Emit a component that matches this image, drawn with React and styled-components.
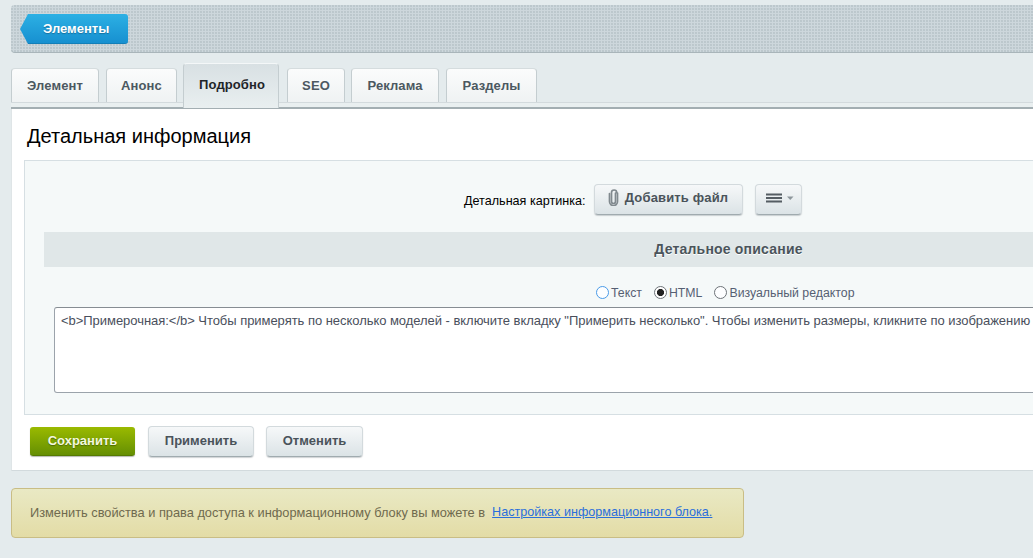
import React from 'react';
import styled, { createGlobalStyle } from 'styled-components';

const Global = createGlobalStyle`
  html, body { margin: 0; padding: 0; height: 100%; overflow: hidden; }
  body { background: #e4ebed; font-family: "Liberation Sans", Arial, sans-serif; }
`;
const Page = styled.div`
  width: 1033px; height: 558px; overflow: hidden; padding: 5px 0 0 11px; box-sizing: border-box;
  display: flex; flex-direction: column;
`;
const Bar = styled.div`
  height: 48px; box-sizing: border-box; border-radius: 4px 0 0 4px; border-bottom: 1px solid #a9b5ba;
  background-color: #cdd7dc;
  background-image: radial-gradient(circle at 1px 1px, #bcc7cc 0.7px, transparent 0.9px);
  background-size: 3px 3px;
  padding: 9px 0 0 9px; display: flex; align-items: flex-start;
`;
const Crumb = styled.a`
  width: 108px; height: 30px; position: relative; box-sizing: border-box; padding-left: 23px;
  display: flex; align-items: center; color: #fff; font-size: 13px; font-weight: bold;
  text-shadow: 0 1px 1px #17709f; letter-spacing: 0;
  background: linear-gradient(#2cb0e4, #1790d0);
  clip-path: polygon(8px 0, 100% 0, 100% 100%, 8px 100%, 0 50%);
  border-radius: 3px; border-bottom: 1px solid #137fb8;
`;
const Tabs = styled.div`
  display: flex; align-items: flex-end; height: 39px; margin-top: 10px; position: relative; z-index: 1;
`;
const Tab = styled.div`
  box-sizing: border-box; width: ${p => p.$w}px; margin-left: ${p => p.$ml}px;
  height: ${p => (p.$active ? 45 : 34)}px; margin-bottom: ${p => (p.$active ? -6 : 0)}px;
  padding-left: ${p => (p.$active ? 2 : 0)}px;
  border: 1px solid #c4cdd0; border-bottom: none; border-radius: 4px 4px 0 0;
  border-top-color: ${p => (p.$active ? '#f4f7f8' : '#d5dcde')};
  background: ${p => (p.$active ? 'linear-gradient(#d8e0e3, #e9eff0)' : 'linear-gradient(#fbfcfc, #eff2f3)')};
  color: ${p => (p.$active ? '#1f2529' : '#4c5861')};
  font-size: 13px; font-weight: bold; letter-spacing: 0.1px; text-align: center;
  line-height: ${p => (p.$active ? 41 : 33)}px;
`;
const Strip = styled.div`
  height: 7px; box-sizing: border-box; background: #e9eff0; border-top: 1px solid #d3dadd; border-bottom: 2px solid #a3aeb2;
`;
const Panel = styled.div`
  background: #fff; height: 362px; box-sizing: border-box; padding: 0 0 0 12px; border-bottom: 1px solid #d2dadd;
  border-left: 1px solid #dfe5e7;
`;
const Title = styled.h2`
  margin: 0; height: 51px; box-sizing: border-box; padding: 15px 0 0 3px; font-size: 20px; line-height: 24px;
  font-weight: normal; color: #000;
`;
const Inner = styled.div`
  height: 255px; box-sizing: border-box; background: #f5f9f9; border: 1px solid #d6dfe3; border-right: none;
  padding: 22px 0 0 19px; display: flex; flex-direction: column;
`;
const FileRow = styled.div`
  display: flex; align-items: center; height: 32px; padding-left: 420px; flex-shrink: 0;
`;
const Label = styled.span`
  font-size: 12.6px; color: #000; margin-right: 8px; position: relative; top: 2px; white-space: nowrap;
`;
const GreyBtn = styled.div`
  box-sizing: border-box; height: 31px; width: ${p => p.$w}px; margin-right: ${p => p.$mr || 0}px;
  padding: 0 0 ${p => p.$pb || 2}px ${p => p.$pl || 0}px;
  border-radius: 4px; border: 1px solid #d3dadd; border-bottom: 1px solid #a0abaf; flex-shrink: 0;
  box-shadow: 0 1px 1px rgba(120,130,135,.35);
  background: linear-gradient(#f6f8f9, #dbe3e6);
  display: flex; align-items: center; justify-content: center; gap: ${p => p.$gap || 0}px;
  color: #4a535a; font-size: 13px; font-weight: bold; letter-spacing: ${p => p.$ls || 0}px;
`;
const SectionHead = styled.div`
  margin-top: 17px; height: 35px; background: #e0e7e8; text-align: center; flex-shrink: 0;
  width: 1369px; font-size: 14px; letter-spacing: 0.2px; font-weight: bold; color: #4a545b; line-height: 35px;
  text-shadow: 0 1px 0 #fff;
`;
const Radios = styled.div`
  height: 40px; flex-shrink: 0; padding-left: 552px; display: flex; align-items: center; font-size: 12.3px; color: #555f73;
  box-sizing: border-box; padding-top: 12px;
`;
const RadioItem = styled.label`
  display: flex; align-items: center; margin-right: 12px; white-space: nowrap;
`;
const Radio = styled.span`
  width: 13px; height: 13px; box-sizing: border-box; border-radius: 50%; margin-right: 2px; position: relative; top: -1px;
  border: 1px solid ${p => (p.$focus ? '#4a9be8' : '#6d7378')};
  background: ${p => (p.$on ? 'radial-gradient(circle, #222 0 3.2px, #fff 3.9px)' : '#fdfeff')};
`;
const TextBox = styled.div`
  margin: 0 0 0 10px; height: 86px; box-sizing: border-box; width: 1300px;
  background: #fff; border: 1px solid #9ba3ab; border-top-color: #868d93; border-radius: 3px;
  padding: 5px 6px; font-size: 13px; letter-spacing: -0.04px; line-height: 16px; color: #4a4f5c; white-space: nowrap;
`;
const Actions = styled.div`
  display: flex; align-items: center; height: 53px; padding-left: 6px;
`;
const SaveBtn = styled.div`
  box-sizing: border-box; width: 105px; height: 29px; margin-right: 13px; border-radius: 3px; padding-bottom: 1px;
  background: linear-gradient(#9aba00, #658f03); border-bottom: 1px solid #557a02;
  box-shadow: 0 1px 1px rgba(90,100,80,.45);
  display: flex; align-items: center; justify-content: center;
  color: #f3f7df; font-size: 13px; font-weight: bold; text-shadow: 0 1px 1px #4d6c00;
`;
const Note = styled.div`
  margin-top: 17px; width: 733px; height: 50px; box-sizing: border-box; border: 1px solid #c9bd85; border-radius: 4px;
  background: linear-gradient(#e9e9c4, #e3dca6);
  padding: 0 0 2px 18px; display: flex; align-items: center; font-size: 12.8px; color: #6f6a4e; white-space: nowrap;
`;
const Link = styled.a`
  color: #2a6fdc; text-decoration: underline; margin-left: 7px; font-size: 12.6px;
`;

const Clip = () => (
  <svg width="11" height="17" viewBox="0 0 11 17" fill="none" stroke="#80898e" strokeWidth="1.7" strokeLinecap="round">
    <path d="M7.5 4v8.5a2 2 0 0 1-4 0V3.6a2.6 2.6 0 0 1 5.2 0" />
    <path d="M1.5 4.5v8a4 4 0 0 0 8 0V4" />
  </svg>
);
const Menu = () => (
  <svg width="28" height="10" viewBox="0 0 28 10">
    <path d="M0 0.5h16v2H0zM0 4h16v2H0zM0 7.5h16v2H0z" fill="#555d63" />
    <path d="M21 3.5h6.5l-3.25 3.5z" fill="#8d969b" />
  </svg>
);

export default function App() {
  return (
    <Page>
      <Global />
      <Bar><Crumb>Элементы</Crumb></Bar>
      <Tabs>
        <Tab $w={88} $ml={0}>Элемент</Tab>
        <Tab $w={71} $ml={7}>Анонс</Tab>
        <Tab $w={96} $ml={6} $active>Подробно</Tab>
        <Tab $w={58} $ml={8}>SEO</Tab>
        <Tab $w={88} $ml={6}>Реклама</Tab>
        <Tab $w={91} $ml={7}>Разделы</Tab>
      </Tabs>
      <Strip />
      <Panel>
        <Title>Детальная информация</Title>
        <Inner>
          <FileRow>
            <Label>Детальная картинка:</Label>
            <GreyBtn $w={149} $mr={12} $gap={6} $pb={3} $ls={0.15}><Clip />Добавить файл</GreyBtn>
            <GreyBtn $w={47} $pl={3}><Menu /></GreyBtn>
          </FileRow>
          <SectionHead>Детальное описание</SectionHead>
          <Radios>
            <RadioItem><Radio $focus />Текст</RadioItem>
            <RadioItem><Radio $on />HTML</RadioItem>
            <RadioItem><Radio />Визуальный редактор</RadioItem>
          </Radios>
          <TextBox>&lt;b&gt;Примерочная:&lt;/b&gt; Чтобы примерять по несколько моделей - включите вкладку "Примерить несколько". Чтобы изменить размеры, кликните по изображению</TextBox>
        </Inner>
        <Actions>
          <SaveBtn>Сохранить</SaveBtn>
          <GreyBtn $w={106} $mr={12}>Применить</GreyBtn>
          <GreyBtn $w={97}>Отменить</GreyBtn>
        </Actions>
      </Panel>
      <Note>Изменить свойства и права доступа к информационному блоку вы можете в<Link>Настройках информационного блока.</Link></Note>
    </Page>
  );
}
